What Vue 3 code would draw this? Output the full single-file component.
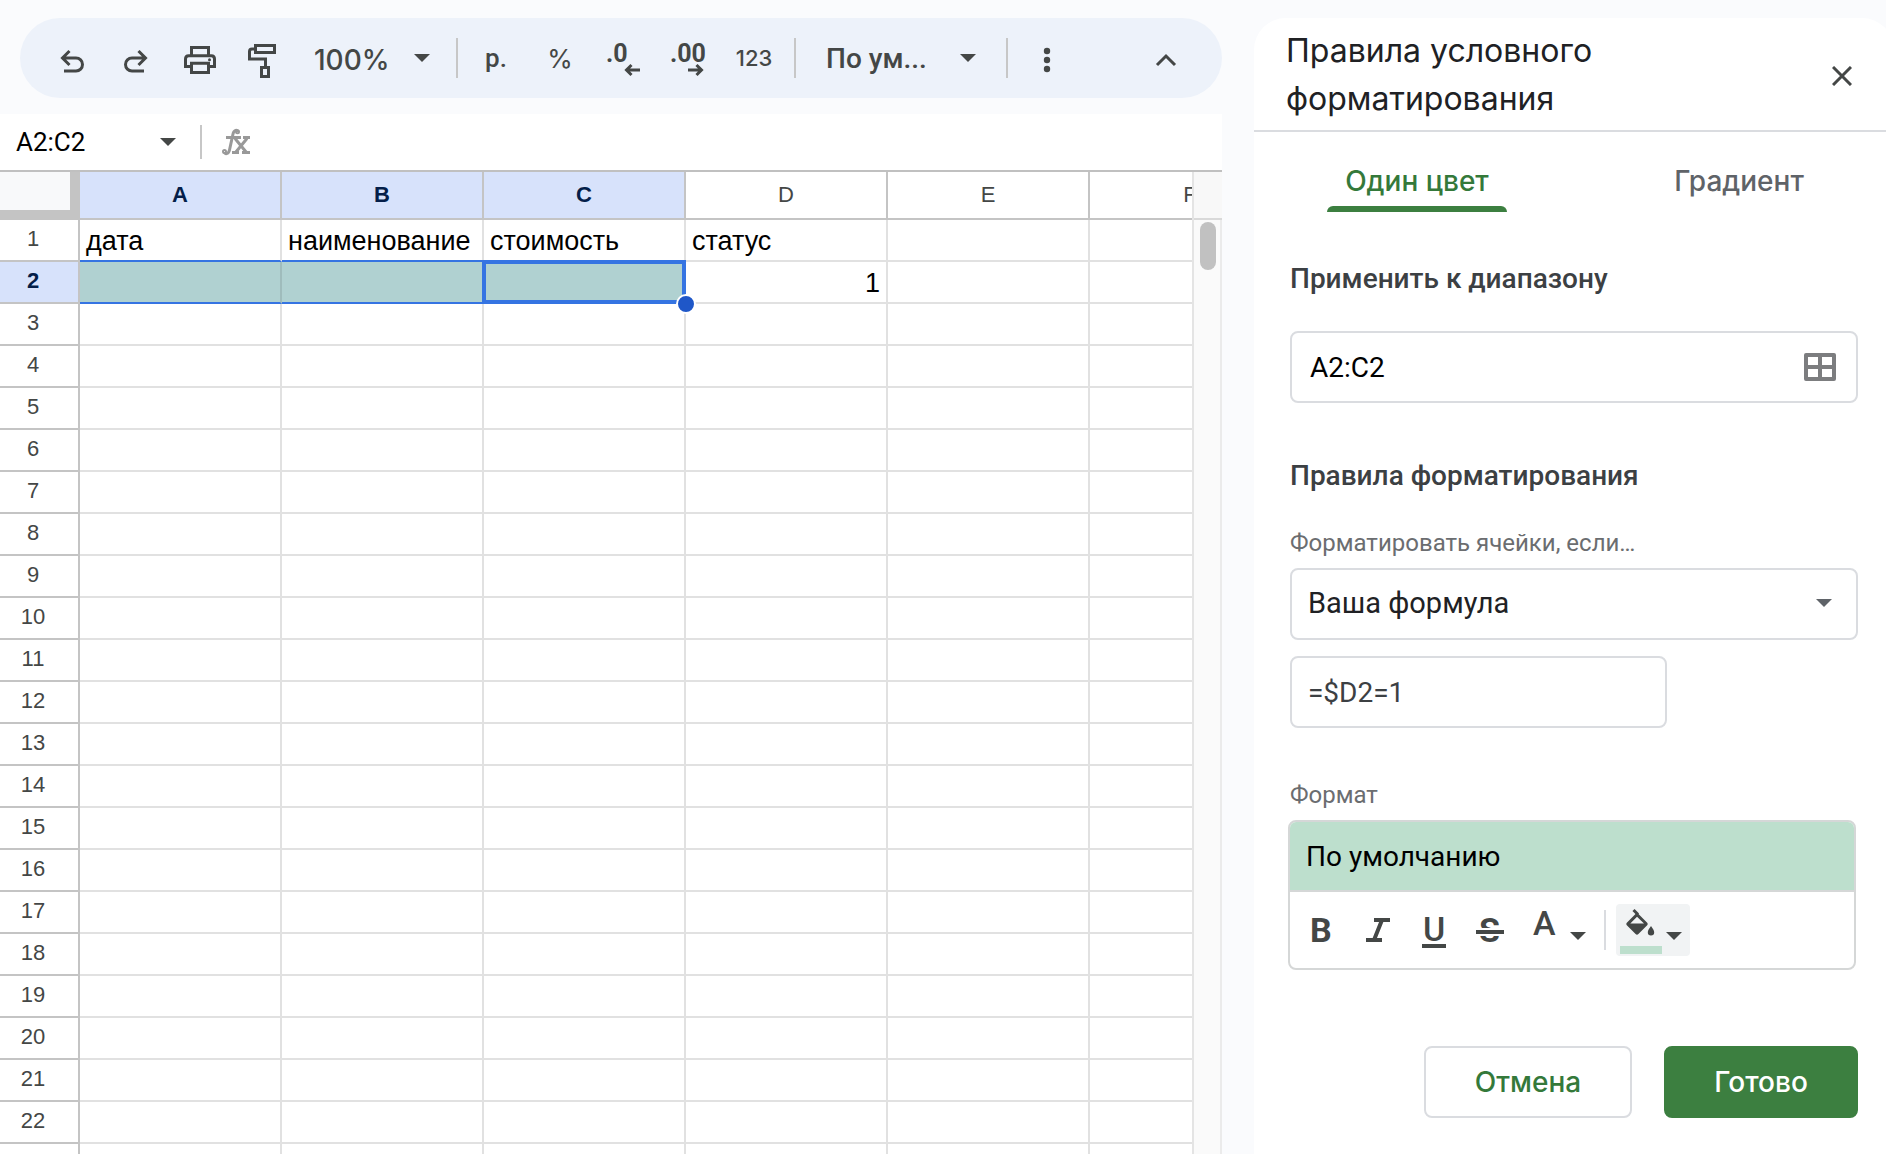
<script setup>
import { ref } from 'vue'

const columns = ['A', 'B', 'C', 'D', 'E', 'F']
const selectedColumns = ['A', 'B', 'C']
const rowCount = 23
const cells = {
  A1: 'дата',
  B1: 'наименование',
  C1: 'стоимость',
  D1: 'статус',
  D2: '1',
}

const zoom = ref('100%')
const range = ref('A2:C2')
const nameBox = ref('A2:C2')
const condition = ref('Ваша формула')
const formula = ref('=$D2=1')

const isSelected = (col, row) => row === 2 && selectedColumns.includes(col)
const isNumber = (value) => value !== undefined && /^\d+$/.test(value)
</script>

<template>
  <div class="app">
    <main class="sheet">
      <div class="toolbar" role="toolbar" aria-label="Панель инструментов">
        <button class="tool" aria-label="Отменить">
          <svg class="icon" viewBox="0 0 48 48"><path d="M21.5 17 14.5 24l7 7M14.5 24H28a6.5 6.5 0 0 1 0 13H16" /></svg>
        </button>
        <button class="tool" aria-label="Повторить">
          <svg class="icon" viewBox="0 0 48 48"><path d="m26.5 17 7 7-7 7M33.5 24H20a6.5 6.5 0 0 0 0 13h12" /></svg>
        </button>
        <button class="tool" aria-label="Печать">
          <svg class="icon" viewBox="0 0 48 48">
            <path d="M15.500 21v-7.500h17V21M15.500 32.500h-6V25q0-3.200 3.200-3.200h22.600q3.200 0 3.200 3.200v7.500h-6M15.500 29.200h17v9.300h-17z" />
            <circle class="solid" cx="33.500" cy="25.800" r="1.500" />
          </svg>
        </button>
        <button class="tool" aria-label="Копировать форматирование">
          <svg class="icon" viewBox="0 0 48 48">
            <path d="M15.500 11.500h19v7h-19zM15.500 15h-3.500q-2.500 0-2.500 2.500V25h16v7.500M21.500 33.500h7v9h-7z" />
          </svg>
        </button>
        <label class="zoom">
          <select v-model="zoom" class="zoom-select" aria-label="Масштаб"><option>100%</option></select>
          <svg class="caret" viewBox="0 0 16 8"><path d="M0 0h16L8 8z" /></svg>
        </label>
        <span class="divider"></span>
        <button class="tool tool-text">р.</button>
        <button class="tool tool-percent">%</button>
        <button class="tool" aria-label="Уменьшить число знаков после запятой">
          <svg class="icon" viewBox="0 0 48 48">
            <text x="6" y="28">.0</text>
            <path d="M40 36H26.500M31.500 31l-5 5 5 5" />
          </svg>
        </button>
        <button class="tool" aria-label="Увеличить число знаков после запятой">
          <svg class="icon" viewBox="0 0 48 48">
            <text x="6" y="28">.00</text>
            <path d="M24 36h13.500M32.500 31l5 5-5 5" />
          </svg>
        </button>
        <button class="tool tool-number">123</button>
        <span class="divider"></span>
        <button class="font-menu">
          <span>По ум...</span>
          <svg class="caret" viewBox="0 0 16 8"><path d="M0 0h16L8 8z" /></svg>
        </button>
        <span class="divider"></span>
        <button class="tool more" aria-label="Ещё">
          <svg class="icon" viewBox="0 0 48 48">
            <circle class="solid" cx="24" cy="17" r="3.200" />
            <circle class="solid" cx="24" cy="26" r="3.200" />
            <circle class="solid" cx="24" cy="35" r="3.200" />
          </svg>
        </button>
        <button class="tool collapse" aria-label="Скрыть меню">
          <svg class="icon" viewBox="0 0 48 48"><path d="m15 31 9-9 9 9" /></svg>
        </button>
      </div>

      <div class="formula-bar">
        <input v-model="nameBox" class="name-box" aria-label="Поле имени" />
        <svg class="caret" viewBox="0 0 16 8"><path d="M0 0h16L8 8z" /></svg>
        <span class="bar-divider"></span>
        <svg class="fx" viewBox="0 0 28 28" role="img" aria-label="Функция">
          <path d="M2.500 24c0 2.500 4 2.500 5-2L11 6c.8-4 4.500-5 5-2M4 9.500h12" />
          <circle cx="2.500" cy="23.500" r="1" />
          <circle cx="15.500" cy="3.800" r="1" />
          <path d="M13 10.500l11.500 14M25 10.500l-11.500 14" />
          <path class="serif" d="M11 9.500h8M21 9.500h7M10 24.500h7M20 24.500h8" />
        </svg>
      </div>

      <div class="grid-area">
        <div class="grid-view">
          <table class="grid">
            <colgroup>
              <col class="col-head" />
              <col v-for="col in columns" :key="col" class="col-data" />
            </colgroup>
            <thead>
              <tr>
                <td class="corner"></td>
                <th v-for="col in columns" :key="col" scope="col" :class="{ picked: selectedColumns.includes(col) }">{{ col }}</th>
              </tr>
            </thead>
            <tbody>
              <tr v-for="row in rowCount" :key="row">
                <th scope="row" :class="{ picked: row === 2 }">{{ row }}</th>
                <td
                  v-for="col in columns"
                  :key="col"
                  :class="{
                    filled: isSelected(col, row),
                    above: isSelected(col, row + 1),
                    active: col === 'C' && row === 2,
                    number: isNumber(cells[col + row]),
                  }"
                >{{ cells[col + row] }}<span v-if="col === 'C' && row === 2" class="handle"></span></td>
              </tr>
            </tbody>
          </table>
        </div>
        <div class="rail">
          <div class="rail-head"></div>
          <div class="rail-track"><div class="rail-thumb"></div></div>
        </div>
      </div>
    </main>

    <aside class="panel">
      <header class="panel-head">
        <h2>Правила условного форматирования</h2>
        <button class="close" aria-label="Закрыть">
          <svg viewBox="0 0 20 20"><path d="m1 1 18 18M19 1 1 19" /></svg>
        </button>
      </header>

      <div class="tabs" role="tablist">
        <button class="tab current" role="tab" aria-selected="true">Один цвет</button>
        <button class="tab" role="tab" aria-selected="false">Градиент</button>
      </div>

      <form class="rules" @submit.prevent>
        <label class="section-title" for="range">Применить к диапазону</label>
        <div class="field range-field">
          <input id="range" v-model="range" />
          <button class="range-button" type="button" aria-label="Выбрать диапазон">
            <svg viewBox="0 0 32 28">
              <path fill-rule="evenodd" d="M2 0h28q2 0 2 2v24q0 2-2 2H2q-2 0-2-2V2q0-2 2-2zM4 4v8h10V4zM18 4v8h10V4zM4 16v8h10v-8zM18 16v8h10v-8z" />
            </svg>
          </button>
        </div>

        <h3 class="section-title rules-title">Правила форматирования</h3>
        <label class="hint" for="condition">Форматировать ячейки, если…</label>
        <div class="field condition-field">
          <select id="condition" v-model="condition"><option>Ваша формула</option></select>
          <svg class="caret" viewBox="0 0 16 8"><path d="M0 0h16L8 8z" /></svg>
        </div>
        <div class="field formula-field">
          <input v-model="formula" aria-label="Значение или формула" />
        </div>

        <p class="hint format-hint">Формат</p>
        <div class="format-box">
          <div class="preview">По умолчанию</div>
          <div class="format-tools">
            <button class="fmt" type="button" aria-label="Полужирный">
              <svg viewBox="0 0 40 48"><text class="bold" x="8" y="36">B</text></svg>
            </button>
            <button class="fmt" type="button" aria-label="Курсив">
              <svg viewBox="0 0 40 48"><path d="M16 14h16M8 34h16M24 14l-8 20" /></svg>
            </button>
            <button class="fmt" type="button" aria-label="Подчёркнутый">
              <svg viewBox="0 0 40 48"><text class="medium" x="9" y="35">U</text><path d="M8 40h24" /></svg>
            </button>
            <button class="fmt" type="button" aria-label="Зачёркнутый">
              <svg viewBox="0 0 40 48">
                <text class="bold" x="9" y="36">S</text>
                <path class="gap" d="M6 26h28" />
                <path d="M6 26h28" />
              </svg>
            </button>
            <button class="fmt-menu" type="button" aria-label="Цвет текста">
              <svg class="glyph" viewBox="0 0 40 48"><text class="medium" x="7" y="29">A</text></svg>
              <svg class="caret" viewBox="0 0 16 8"><path d="M0 0h16L8 8z" /></svg>
            </button>
            <span class="fmt-divider"></span>
            <button class="fmt-menu fill-menu" type="button" aria-label="Цвет заливки">
              <svg class="glyph" viewBox="0 0 40 48">
                <path d="M13.500 4 18 8.500" />
                <path class="solid" fill-rule="evenodd" d="M17 6.500 6.800 16.800q-1.200 1.200 0 2.400l8.800 8.800q1.400 1.400 2.800 0l8.800-8.800q1.200-1.200 0-2.400zM17 10.800l7 6.700H10.300z" />
                <path class="solid" d="M31 20c2 2.800 3.200 4.600 3.200 6.300a3.200 3.200 0 0 1-6.400 0c0-1.700 1.200-3.500 3.200-6.300z" />
              </svg>
              <svg class="caret" viewBox="0 0 16 8"><path d="M0 0h16L8 8z" /></svg>
              <span class="swatch"></span>
            </button>
          </div>
        </div>

        <div class="actions">
          <button class="cancel" type="button">Отмена</button>
          <button class="done" type="submit">Готово</button>
        </div>
      </form>
    </aside>
  </div>
</template>

<style>
body {
  margin: 0;
  overflow: hidden;
}
</style>

<style scoped>
* {
  box-sizing: border-box;
}

.app {
  display: flex;
  gap: 32px;
  height: 100vh;
  overflow: hidden;
  background: #fafbfd;
  color: #202124;
  font-family: Roboto, "Liberation Sans", sans-serif;
}

button,
input,
select {
  margin: 0;
  padding: 0;
  border: 0;
  background: none;
  color: inherit;
  font: inherit;
  outline: 0;
  appearance: none;
}

svg {
  display: block;
}

.caret {
  flex: none;
  width: 16px;
  height: 8px;
  fill: #444746;
  pointer-events: none;
}

/* Sheet */
.sheet {
  display: flex;
  flex: 1;
  flex-direction: column;
  min-width: 0;
  padding-top: 18px;
}

.toolbar {
  display: flex;
  flex: none;
  align-items: center;
  height: 80px;
  margin: 0 0 16px 20px;
  padding-left: 20px;
  border-radius: 40px;
  background: #edf2fa;
  color: #444746;
}

.tool {
  display: flex;
  align-items: center;
  justify-content: center;
  width: 64px;
  height: 64px;
}

.icon {
  width: 48px;
  height: 48px;
  fill: none;
  stroke: #444746;
  stroke-width: 3;
}

.icon .solid {
  fill: #444746;
  stroke: none;
}

.icon text {
  fill: #444746;
  stroke: none;
  font: 700 25px Roboto, sans-serif;
}

.zoom {
  display: flex;
  align-items: center;
  width: 160px;
  padding-left: 18px;
}

.zoom-select {
  width: 100px;
  height: 44px;
  padding-top: 4px;
  font: 500 28px/40px Inter, sans-serif;
}

.divider {
  flex: none;
  width: 2px;
  height: 40px;
  background: #c7c7c7;
}

.tool-text {
  font-size: 26px;
  font-weight: 500;
}

.divider + .tool-text {
  margin-left: 6px;
}

.tool-percent {
  font: 400 26px Inter, sans-serif;
}

.tool-number {
  padding-left: 4px;
  font: 500 22px Inter, sans-serif;
}

.tool-number + .divider {
  margin-left: 10px;
}

.font-menu {
  display: flex;
  align-items: center;
  justify-content: space-between;
  width: 210px;
  height: 64px;
  padding: 0 30px;
  font-size: 28px;
  font-weight: 500;
}

.more {
  margin-left: 7px;
}

.collapse {
  margin: 0 24px 0 auto;
}

.formula-bar {
  display: flex;
  flex: none;
  align-items: center;
  height: 58px;
  padding-left: 16px;
  border-bottom: 2px solid #c0c0c0;
  background: #fff;
}

.name-box {
  width: 144px;
  height: 40px;
  color: #000;
  font-size: 26px;
}

.bar-divider {
  width: 2px;
  height: 34px;
  margin: 0 20px 0 24px;
  background: #c7c7c7;
}

.fx {
  width: 28px;
  height: 28px;
  fill: none;
  stroke: #999;
  stroke-width: 3;
}

.fx .serif {
  stroke-width: 3;
}

.grid-area {
  display: flex;
  flex: 1;
  min-height: 0;
}

.grid-view {
  flex: 1;
  min-width: 0;
  overflow: hidden;
  background: #fff;
}

.grid {
  width: 1292px;
  border-spacing: 0;
  table-layout: fixed;
}

.col-head {
  width: 80px;
}

.col-data {
  width: 202px;
}

.grid th {
  padding: 0;
  border: solid #c4c4c4;
  border-width: 0 2px 2px 0;
  color: #444746;
  font: 22px/40px "Liberation Sans", sans-serif;
}

.grid thead th {
  height: 48px;
}

.grid tbody th {
  height: 42px;
  padding-right: 12px;
  padding-bottom: 2px;
  line-height: 36px;
}

.grid th.picked {
  background: #d7e2fb;
  color: #041e49;
  font-weight: 700;
}

.grid td {
  position: relative;
  height: 42px;
  padding: 0 6px 3px 6px;
  border: solid #e1e1e1;
  border-width: 0 2px 2px 0;
  color: #000;
  font: 27px/32px "Liberation Sans", sans-serif;
  vertical-align: bottom;
}

.grid td.number {
  text-align: right;
}

.grid td.above {
  border-bottom-color: #3574e2;
}

.grid td.filled {
  border-right-color: #9fbcbc;
  border-bottom-color: #3574e2;
  background: #b0d1d1;
}

.grid td.active::after {
  position: absolute;
  inset: -2px;
  border: 4px solid #3574e2;
  content: "";
}

.handle {
  position: absolute;
  right: -12px;
  bottom: -12px;
  z-index: 1;
  width: 20px;
  height: 20px;
  border: 2px solid #fff;
  border-radius: 50%;
  background: #1f57c8;
}

.grid td.corner {
  height: 48px;
  border-color: #c4c4c4;
  background: #f8f9fa;
  box-shadow: inset -8px -8px #c4c4c4;
}

.rail {
  display: flex;
  flex: none;
  flex-direction: column;
  width: 30px;
  border-left: 2px solid #e4e4e4;
}

.rail-head {
  height: 48px;
  border-bottom: 2px solid #d9d9d9;
  background: #f8f8f8;
}

.rail-track {
  flex: 1;
  padding: 2px 4px 0 6px;
  border-right: 2px solid #ebebeb;
  background: #fafafa;
}

.rail-thumb {
  height: 48px;
  border-radius: 8px;
  background: #c1c1c1;
}

/* Side panel */
.panel {
  flex: none;
  width: 640px;
  margin: 18px -8px 0 0;
  border-radius: 32px 32px 0 0;
  background: #fff;
}

.panel-head {
  display: flex;
  align-items: center;
  justify-content: space-between;
  height: 114px;
  padding: 4px 42px 0 32px;
  border-bottom: 2px solid #dadce0;
}

.panel-head h2 {
  width: 400px;
  margin: 0;
  padding-bottom: 2px;
  font: 400 32px/48px Inter, sans-serif;
}

.close svg {
  width: 20px;
  height: 20px;
  fill: none;
  stroke: #444746;
  stroke-width: 3;
}

.tabs {
  display: flex;
  height: 80px;
  margin-right: -6px;
  padding-left: 2px;
}

.tab {
  display: flex;
  flex: 1;
  flex-direction: column;
  align-items: center;
  justify-content: space-between;
  padding-top: 29px;
  color: #5f6368;
  font: 500 28px/40px Inter, sans-serif;
}

.tab.current {
  color: #34793a;
}

.tab.current::after {
  width: 180px;
  height: 6px;
  border-radius: 6px 6px 0 0;
  background: #3c7f40;
  content: "";
}

.rules {
  display: flex;
  flex-direction: column;
  padding: 49px 36px 0;
}

.section-title {
  margin: 0 0 34px;
  color: #3c4043;
  font: 500 28px/36px Roboto, sans-serif;
}

.rules-title {
  margin: 55px 0 33px;
}

.hint {
  margin: 0 0 9px;
  color: #6b6d70;
  font-size: 24px;
  line-height: 32px;
}

.field {
  display: flex;
  align-items: center;
  height: 72px;
  padding: 0 20px 0 16px;
  border: 2px solid #dadce0;
  border-radius: 8px;
  font-size: 28px;
}

.field input,
.field select {
  flex: 1;
  min-width: 0;
  height: 40px;
}

.range-field {
  padding-left: 18px;
  color: #000;
}

.range-button svg {
  width: 32px;
  height: 28px;
  fill: #7c7d7f;
}

.condition-field {
  padding-right: 24px;
  padding-bottom: 2px;
  font-size: 29px;
}

.condition-field .caret {
  fill: #5f6368;
}

.formula-field {
  width: 377px;
  margin-top: 16px;
  color: #3c4043;
}

.format-hint {
  margin-top: 51px;
}

.format-box {
  margin: 0 2px 0 -2px;
  border: 2px solid #d5d7d7;
  border-radius: 8px;
  overflow: hidden;
}

.preview {
  height: 70px;
  padding-left: 16px;
  border-bottom: 2px solid #d5d7d7;
  background: #bddfcd;
  color: #000;
  font-size: 28px;
  line-height: 70px;
}

.format-tools {
  display: flex;
  align-items: center;
  height: 76px;
  padding-left: 12px;
}

.fmt {
  width: 40px;
  height: 48px;
  margin-right: 16px;
}

.fmt svg,
.glyph {
  width: 40px;
  height: 48px;
  fill: none;
  stroke: #444746;
  stroke-width: 4;
}

.fmt .gap {
  stroke: #fff;
  stroke-width: 8;
}

.format-tools text {
  fill: #444746;
  stroke: none;
  font: 500 34px Roboto, sans-serif;
}

.format-tools .bold {
  font-weight: 700;
}

.fmt-menu {
  position: relative;
  display: flex;
  align-items: center;
  width: 74px;
  height: 52px;
}

.fmt-menu .caret {
  margin: 12px 0 0 4px;
}

.fmt-divider {
  width: 2px;
  height: 40px;
  margin: 0 10px 0 4px;
  background: #dadce0;
}

.fill-menu {
  padding-left: 4px;
  border-radius: 4px;
  background: #f1f3f4;
}

.fill-menu .caret {
  margin-left: 6px;
}

.glyph .solid {
  fill: #444746;
  stroke: none;
}

.fill-menu .glyph {
  stroke-width: 3;
}

.swatch {
  position: absolute;
  bottom: 2px;
  left: 4px;
  width: 42px;
  height: 8px;
  background: #bddfcd;
}

.actions {
  display: flex;
  justify-content: flex-end;
  gap: 32px;
  margin-top: 76px;
}

.cancel,
.done {
  height: 72px;
  border: 2px solid #dadce0;
  border-radius: 8px;
  color: #34793a;
  font: 500 28px Inter, sans-serif;
}

.cancel {
  width: 208px;
}

.done {
  width: 194px;
  border-color: #3c7f40;
  background: #3c7f40;
  color: #fff;
}
</style>
